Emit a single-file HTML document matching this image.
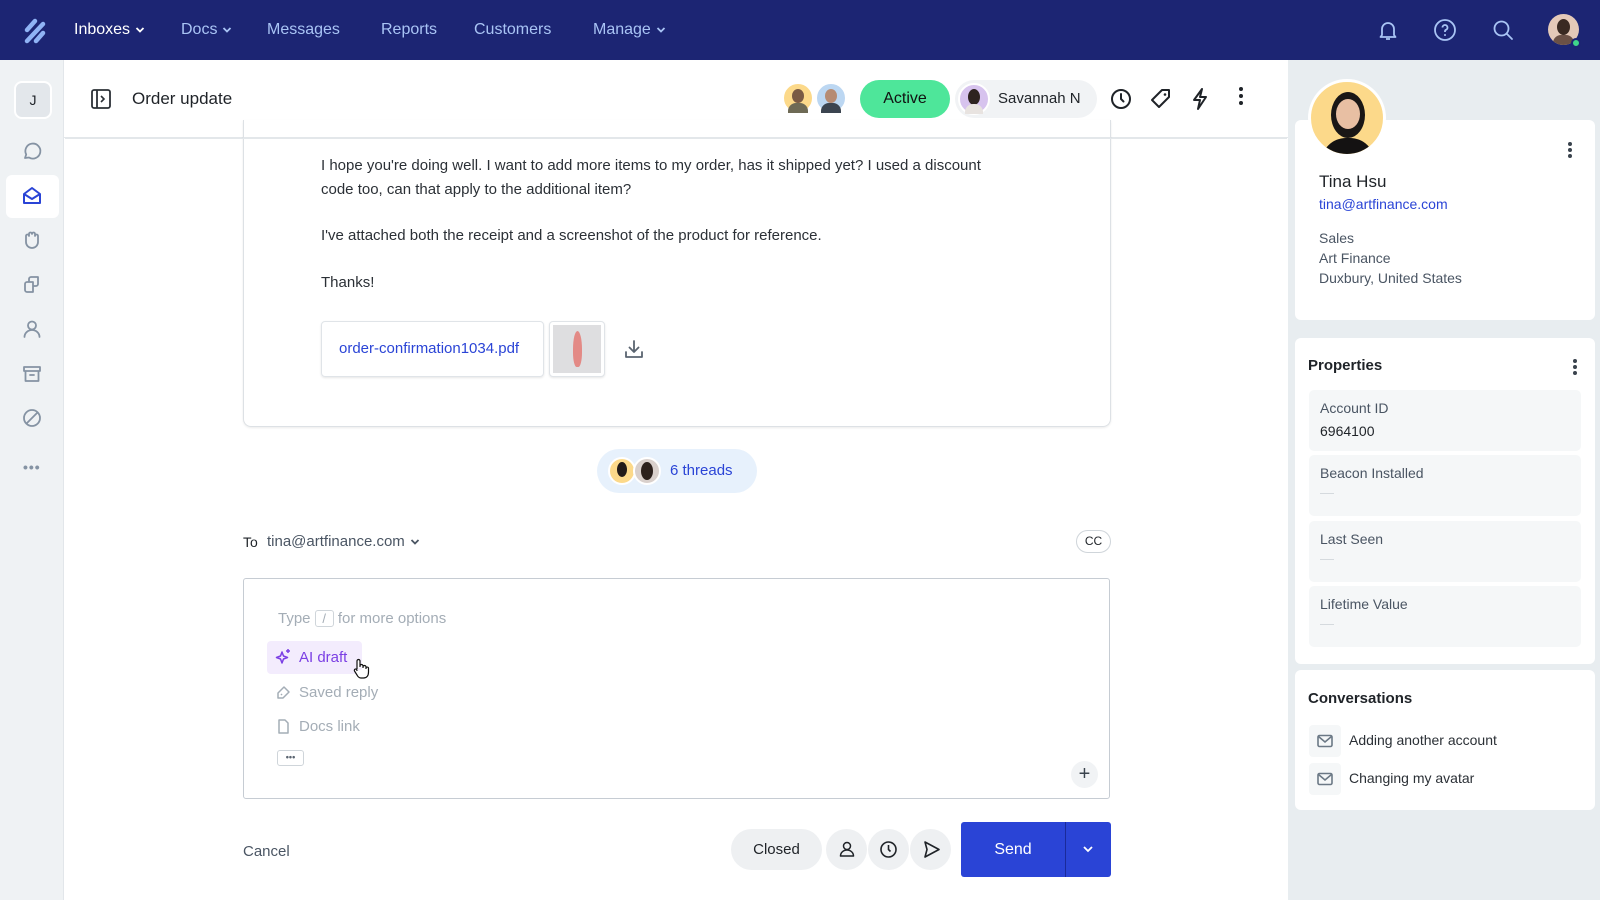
<!DOCTYPE html>
<html><head><meta charset="utf-8"><style>
*{box-sizing:border-box;margin:0;padding:0}
body{width:1600px;height:900px;overflow:hidden;font-family:"Liberation Sans",sans-serif;background:#fff;position:relative;color:#1f2328}
.a{position:absolute}
.nav{left:0;top:0;width:1600px;height:60px;background:#1c2573}
.nav .it{top:21px;font-size:16px;color:#a9c4f5;line-height:18px;white-space:nowrap}
.chev{display:inline-block;vertical-align:middle;margin-left:5px}
.side{left:0;top:60px;width:64px;height:840px;background:#eff2f4;border-right:1px solid #e2e6ea}
.ic{stroke:#8593a3;fill:none;stroke-width:1.8;stroke-linecap:round;stroke-linejoin:round}
.hdr{left:64px;top:60px;width:1224px;height:78px;background:#fff;border-bottom:1px solid #e3e7ea}
.rp{left:1288px;top:60px;width:312px;height:840px;background:#e8edf0}
.card{background:#fff;border-radius:6px;left:7px;width:300px}
.fld{left:14px;width:272px;height:61px;background:#f5f7f8;border-radius:5px}
.fld .l{left:11px;top:10px;font-size:14px;color:#4a5563}
.fld .v{left:11px;top:33px;font-size:14px;color:#1f2328}
.fld .d{left:11px;top:38px;width:14px;height:1px;background:#d5dade}
.msg{font-size:15px;color:#2b3036;left:321px}
.circ{border-radius:50%}
</style></head><body>

<div class="a nav">
 <svg class="a" style="left:22px;top:18px" width="26" height="26" viewBox="0 0 26 26"><g stroke="#8fb3f5" stroke-width="4.5" stroke-linecap="round"><line x1="5" y1="12" x2="13" y2="3"/><line x1="5" y1="23" x2="21" y2="6"/><line x1="14" y1="23" x2="21" y2="15"/></g></svg>
 <div class="a it" style="left:74px;color:#fff">Inboxes<svg class="chev" width="10" height="8" viewBox="0 0 10 8"><path d="M1.5 2l3.5 3.5L8.5 2" fill="none" stroke="#fff" stroke-width="1.8"/></svg></div>
 <div class="a it" style="left:181px">Docs<svg class="chev" width="10" height="8" viewBox="0 0 10 8"><path d="M1.5 2l3.5 3.5L8.5 2" fill="none" stroke="#a9c4f5" stroke-width="1.8"/></svg></div>
 <div class="a it" style="left:267px">Messages</div>
 <div class="a it" style="left:381px">Reports</div>
 <div class="a it" style="left:474px">Customers</div>
 <div class="a it" style="left:593px">Manage<svg class="chev" width="10" height="8" viewBox="0 0 10 8"><path d="M1.5 2l3.5 3.5L8.5 2" fill="none" stroke="#a9c4f5" stroke-width="1.8"/></svg></div>
 <svg class="a" style="left:1376px;top:18px" width="24" height="24" viewBox="0 0 24 24"><path d="M6 17V11a6 6 0 0 1 12 0v6l1.5 2h-15z M10 21h4" fill="none" stroke="#a9c4f5" stroke-width="1.8" stroke-linejoin="round"/></svg>
 <svg class="a" style="left:1433px;top:18px" width="24" height="24" viewBox="0 0 24 24"><circle cx="12" cy="12" r="10" fill="none" stroke="#a9c4f5" stroke-width="1.8"/><path d="M9.5 9.5a2.5 2.5 0 1 1 3.5 2.3c-.7.3-1 .8-1 1.5v.7" fill="none" stroke="#a9c4f5" stroke-width="1.8"/><circle cx="12" cy="17" r="1" fill="#a9c4f5"/></svg>
 <svg class="a" style="left:1491px;top:18px" width="24" height="24" viewBox="0 0 24 24"><circle cx="10.5" cy="10.5" r="7" fill="none" stroke="#a9c4f5" stroke-width="1.8"/><line x1="16" y1="16" x2="21" y2="21" stroke="#a9c4f5" stroke-width="1.8" stroke-linecap="round"/></svg>
 <div class="a circ" style="left:1548px;top:14px;width:31px;height:31px;background:#e4c9b8;overflow:hidden"><div class="a circ" style="left:9px;top:5px;width:13px;height:16px;background:#3a2a22"></div><div class="a" style="left:5px;top:21px;width:21px;height:12px;background:#6b5146;border-radius:8px 8px 0 0"></div></div>
 <div class="a circ" style="left:1571px;top:38px;width:10px;height:10px;background:#3fd68a;border:2px solid #1c2573"></div>
</div>

<div class="a side">
 <div class="a" style="left:14px;top:21px;width:38px;height:38px;background:#e3e7eb;border:2px solid #fff;border-radius:8px;font-size:14px;text-align:center;line-height:34px">J</div>
 <svg class="a" style="left:21px;top:80px" width="22" height="22" viewBox="0 0 22 22"><path class="ic" d="M4 18l1.2-3.5A7.5 7.5 0 1 1 8 17.5z"/></svg>
 <div class="a" style="left:6px;top:115px;width:53px;height:43px;background:#fff;border-radius:6px"></div>
 <svg class="a" style="left:21px;top:125px" width="22" height="22" viewBox="0 0 22 22"><path d="M3 9l8-6 8 6v9H3z M3 9l8 5 8-5" fill="none" stroke="#2a44d6" stroke-width="2" stroke-linejoin="round"/></svg>
 <svg class="a" style="left:21px;top:169px" width="22" height="22" viewBox="0 0 22 22"><path class="ic" d="M5 12V7a1.5 1.5 0 0 1 3 0V5a1.5 1.5 0 0 1 3 0v0a1.5 1.5 0 0 1 3 0v2a1.5 1.5 0 0 1 3 0v6a6 6 0 0 1-12 0z"/></svg>
 <svg class="a" style="left:21px;top:214px" width="22" height="22" viewBox="0 0 22 22"><path class="ic" d="M8 8V5a2 2 0 0 1 2-2h7v7a2 2 0 0 1-2 2h-3 M4 10a2 2 0 0 1 2-2h6v10H6a2 2 0 0 1-2-2z"/></svg>
 <svg class="a" style="left:21px;top:258px" width="22" height="22" viewBox="0 0 22 22"><circle class="ic" cx="11" cy="7.5" r="4"/><path class="ic" d="M3.5 19a7.5 7 0 0 1 15 0"/></svg>
 <svg class="a" style="left:21px;top:303px" width="22" height="22" viewBox="0 0 22 22"><path class="ic" d="M3 4h16v4H3z M4.5 8v10h13V8 M9 12h4"/></svg>
 <svg class="a" style="left:21px;top:347px" width="22" height="22" viewBox="0 0 22 22"><circle class="ic" cx="11" cy="11" r="8"/><line class="ic" x1="6" y1="16" x2="16" y2="6"/></svg>
 <div class="a" style="left:23px;top:399px;font-size:14px;color:#8593a3;letter-spacing:1px;font-weight:bold">•••</div>
</div>

<div class="a hdr">
 <svg class="a" style="left:26px;top:28px" width="22" height="22" viewBox="0 0 22 22"><rect x="2" y="2" width="18" height="18" rx="2" fill="none" stroke="#2b3036" stroke-width="1.8"/><line x1="7" y1="2" x2="7" y2="20" stroke="#2b3036" stroke-width="1.8"/><path d="M11 8l3 3-3 3" fill="none" stroke="#2b3036" stroke-width="1.6"/></svg>
 <div class="a" style="left:68px;top:29px;font-size:17px;color:#1f2328">Order update</div>
 <div class="a circ" style="left:718px;top:22px;width:32px;height:32px;background:#fcd98a;border:2px solid #fff"><div class="a circ" style="left:8px;top:5px;width:12px;height:14px;background:#7a5a44"></div><div class="a" style="left:4px;top:19px;width:20px;height:10px;background:#6e6a55;border-radius:8px 8px 0 0"></div></div>
 <div class="a circ" style="left:751px;top:22px;width:32px;height:32px;background:#bcd7f2;border:2px solid #fff"><div class="a circ" style="left:8px;top:5px;width:12px;height:14px;background:#b68b73"></div><div class="a" style="left:4px;top:19px;width:20px;height:10px;background:#3b4450;border-radius:8px 8px 0 0"></div></div>
 <div class="a" style="left:796px;top:20px;width:90px;height:38px;background:#4ee69a;border-radius:19px;font-size:16px;text-align:center;line-height:38px;color:#111">Active</div>
 <div class="a" style="left:891px;top:20px;width:142px;height:38px;background:#f1f3f5;border-radius:19px"><div class="a circ" style="left:3px;top:3px;width:32px;height:32px;background:#d7c3ee;border:2px solid #fff"><div class="a circ" style="left:8px;top:4px;width:12px;height:16px;background:#2e2320"></div><div class="a" style="left:5px;top:19px;width:18px;height:10px;background:#e8e3e0;border-radius:8px 8px 0 0"></div></div><div class="a" style="left:43px;top:10px;font-size:15px;color:#1f2328">Savannah N</div></div>
 <svg class="a" style="left:1045px;top:27px" width="24" height="24" viewBox="0 0 24 24"><circle cx="12" cy="12" r="9" fill="none" stroke="#1f2328" stroke-width="2"/><path d="M12 7v5l2.5 2.5" fill="none" stroke="#1f2328" stroke-width="2" stroke-linecap="round"/></svg>
 <svg class="a" style="left:1085px;top:27px" width="24" height="24" viewBox="0 0 24 24"><path d="M13 3h7v7l-10 10-7-7z" fill="none" stroke="#1f2328" stroke-width="2" stroke-linejoin="round"/><circle cx="16" cy="7.5" r="1.3" fill="#1f2328"/></svg>
 <svg class="a" style="left:1124px;top:27px" width="24" height="24" viewBox="0 0 24 24"><path d="M14 2L6 13h6l-2 9 8-12h-6z" fill="none" stroke="#1f2328" stroke-width="2" stroke-linejoin="round"/></svg>
 <div class="a" style="left:1175px;top:27px;width:4px;font-size:0"><div class="circ" style="width:4px;height:4px;background:#1f2328;margin-bottom:3px"></div><div class="circ" style="width:4px;height:4px;background:#1f2328;margin-bottom:3px"></div><div class="circ" style="width:4px;height:4px;background:#1f2328"></div></div>
</div>

<div class="a" style="left:243px;top:120px;width:868px;height:307px;border:1px solid #dde1e5;border-top:none;border-radius:0 0 8px 8px;box-shadow:0 1px 2px rgba(0,0,0,.08)"></div>
<div class="a" style="left:65px;top:138px;width:1222px;height:1px;background:#e3e7ea"></div>
<div class="a msg" style="top:154px;line-height:24px">I hope you're doing well. I want to add more items to my order, has it shipped yet? I used a discount<br>code too, can that apply to the additional item?</div>
<div class="a msg" style="top:227px">I've attached both the receipt and a screenshot of the product for reference.</div>
<div class="a msg" style="top:274px">Thanks!</div>
<div class="a" style="left:321px;top:321px;width:223px;height:56px;border:1px solid #e0e4e8;border-radius:4px;box-shadow:0 1px 2px rgba(0,0,0,.1);font-size:15px;color:#2a44d6;line-height:54px;padding-left:17px">order-confirmation1034.pdf</div>
<div class="a" style="left:549px;top:321px;width:56px;height:56px;border:1px solid #e0e4e8;border-radius:4px;background:#fff;box-shadow:0 1px 2px rgba(0,0,0,.1)"><div class="a" style="left:3px;top:3px;width:48px;height:48px;background:#dedee0"><div class="a" style="left:20px;top:6px;width:9px;height:36px;background:#e38a86;border-radius:50% 50% 40% 40%"></div></div></div>
<svg class="a" style="left:623px;top:338px" width="22" height="22" viewBox="0 0 22 22"><path d="M11 3v11 M6.5 9.5L11 14l4.5-4.5 M3 14v5h16v-5" fill="none" stroke="#5a6470" stroke-width="1.8" stroke-linecap="round" stroke-linejoin="round"/></svg>

<div class="a" style="left:597px;top:449px;width:160px;height:44px;background:#e7f1fc;border-radius:22px"><div class="a circ" style="left:11px;top:8px;width:28px;height:28px;background:#fcd98a;border:2px solid #fff"><div class="a circ" style="left:7px;top:3px;width:10px;height:15px;background:#221b18"></div></div><div class="a circ" style="left:36px;top:8px;width:28px;height:28px;background:#d9d0cc;border:2px solid #fff"><div class="a circ" style="left:6px;top:3px;width:12px;height:18px;background:#2c211c"></div></div><div class="a" style="left:73px;top:13px;font-size:15px;color:#2a44d6">6 threads</div></div>

<div class="a" style="left:243px;top:534px;font-size:14px;color:#1f2328">To</div>
<div class="a" style="left:267px;top:533px;font-size:15px;color:#4a5563">tina@artfinance.com<svg class="chev" width="10" height="8" viewBox="0 0 10 8"><path d="M1.5 2l3.5 3.5L8.5 2" fill="none" stroke="#4a5563" stroke-width="1.8"/></svg></div>
<div class="a" style="left:1076px;top:530px;width:35px;height:23px;border:1px solid #cfd5da;border-radius:12px;font-size:12px;text-align:center;line-height:21px">CC</div>

<div class="a" style="left:243px;top:578px;width:867px;height:221px;border:1px solid #c6ccd3;border-radius:3px"></div>
<div class="a" style="left:278px;top:610px;font-size:15px;color:#a4adb6">Type <span style="display:inline-block;border:1px solid #cfd5da;border-radius:3px;width:19px;text-align:center;font-size:13px">/</span> for more options</div>
<div class="a" style="left:267px;top:641px;width:95px;height:33px;background:#f3ecfd;border-radius:4px"></div>
<svg class="a" style="left:275px;top:648px" width="18" height="18" viewBox="0 0 18 18"><path d="M7 4l1.5 4 4 1.5-4 1.5L7 15l-1.5-4-4-1.5 4-1.5z M13 1v4 M11 3h4" fill="none" stroke="#7b3fe4" stroke-width="1.5" stroke-linejoin="round"/></svg>
<div class="a" style="left:299px;top:649px;font-size:15px;color:#7b3fe4">AI draft</div>
<svg class="a" style="left:352px;top:658px" width="18" height="22" viewBox="0 0 18 22"><path d="M5 11V3a1.5 1.5 0 0 1 3 0v6 M8 8a1.5 1.5 0 0 1 3 0v2 M11 9a1.5 1.5 0 0 1 3 0v2 M14 10a1.3 1.3 0 0 1 2.5 0v4c0 4-2 6-5 6H9c-2 0-3-1-4-3l-2.5-4a1.3 1.3 0 0 1 2.3-1.3L5 13" fill="#fff" stroke="#111" stroke-width="1.2" stroke-linejoin="round"/></svg>
<svg class="a" style="left:275px;top:684px" width="17" height="17" viewBox="0 0 17 17"><path d="M9 3l5 5-6 6H3V9z M6 11l1-1" fill="none" stroke="#a4adb6" stroke-width="1.5" stroke-linejoin="round"/></svg>
<div class="a" style="left:299px;top:684px;font-size:15px;color:#a4adb6">Saved reply</div>
<svg class="a" style="left:275px;top:718px" width="17" height="17" viewBox="0 0 17 17"><path d="M4 2h6l3 3v10H4z" fill="none" stroke="#a4adb6" stroke-width="1.5" stroke-linejoin="round"/></svg>
<div class="a" style="left:299px;top:718px;font-size:15px;color:#a4adb6">Docs link</div>
<div class="a" style="left:277px;top:750px;width:27px;height:16px;border:1px solid #cfd5da;border-radius:3px;font-size:9px;text-align:center;line-height:13px;color:#5a6470;font-weight:bold">•••</div>
<div class="a circ" style="left:1071px;top:761px;width:27px;height:27px;background:#f1f3f5;font-size:20px;text-align:center;line-height:26px;color:#3a434d">+</div>

<div class="a" style="left:243px;top:843px;font-size:15px;color:#4a5563">Cancel</div>
<div class="a" style="left:731px;top:829px;width:91px;height:41px;background:#eef0f2;border-radius:21px;font-size:15px;text-align:center;line-height:41px;color:#1f2328">Closed</div>
<div class="a circ" style="left:826px;top:829px;width:41px;height:41px;background:#eef0f2"><svg class="a" style="left:12px;top:11px" width="18" height="18" viewBox="0 0 18 18"><circle cx="9" cy="6" r="3.5" fill="none" stroke="#1f2328" stroke-width="1.5"/><path d="M2.5 16a6.5 6 0 0 1 13 0z" fill="none" stroke="#1f2328" stroke-width="1.5" stroke-linejoin="round"/></svg></div>
<div class="a circ" style="left:868px;top:829px;width:41px;height:41px;background:#eef0f2"><svg class="a" style="left:11px;top:11px" width="19" height="19" viewBox="0 0 19 19"><circle cx="9.5" cy="9.5" r="7.5" fill="none" stroke="#1f2328" stroke-width="1.6"/><path d="M9.5 5v4.5l2 2" fill="none" stroke="#1f2328" stroke-width="1.6"/></svg></div>
<div class="a circ" style="left:910px;top:829px;width:41px;height:41px;background:#eef0f2"><svg class="a" style="left:12px;top:11px" width="19" height="19" viewBox="0 0 19 19"><path d="M3 2l14 7.5L3 17l2-7.5z" fill="none" stroke="#1f2328" stroke-width="1.6" stroke-linejoin="round"/></svg></div>
<div class="a" style="left:961px;top:822px;width:150px;height:55px;background:#2a44d6;border-radius:3px"><div class="a" style="left:0;top:0;width:104px;height:55px;font-size:16px;color:#fff;text-align:center;line-height:55px">Send</div><div class="a" style="left:104px;top:0;width:1px;height:55px;background:#1a2a9a"></div><svg class="a" style="left:121px;top:22px" width="12" height="10" viewBox="0 0 12 10"><path d="M2 3l4 4 4-4" fill="none" stroke="#fff" stroke-width="1.8"/></svg></div>

<div class="a rp">
 <div class="a card" style="top:60px;height:200px"></div>
 <div class="a circ" style="left:20px;top:19px;width:78px;height:78px;background:#fcd98a;border:3px solid #fff;overflow:hidden"><div class="a circ" style="left:20px;top:10px;width:34px;height:46px;background:#1a1716"></div><div class="a circ" style="left:25px;top:17px;width:24px;height:30px;background:#e8bfa3"></div><div class="a" style="left:10px;top:56px;width:54px;height:30px;background:#141212;border-radius:25px 25px 0 0"></div></div>
 <div class="a" style="left:280px;top:82px;width:4px;font-size:0"><div class="circ" style="width:4px;height:4px;background:#3a434d;margin-bottom:2px"></div><div class="circ" style="width:4px;height:4px;background:#3a434d;margin-bottom:2px"></div><div class="circ" style="width:4px;height:4px;background:#3a434d"></div></div>
 <div class="a" style="left:31px;top:112px;font-size:17px;color:#1f2328">Tina Hsu</div>
 <div class="a" style="left:31px;top:136px;font-size:14px;color:#2a44d6">tina@artfinance.com</div>
 <div class="a" style="left:31px;top:168px;font-size:14px;color:#4a5563;line-height:20px">Sales<br>Art Finance<br>Duxbury, United States</div>

 <div class="a card" style="top:278px;height:326px">
  <div class="a" style="left:13px;top:19px;font-size:15px;font-weight:bold;color:#1f2328">Properties</div>
  <div class="a" style="left:278px;top:21px;width:4px;font-size:0"><div class="circ" style="width:4px;height:4px;background:#3a434d;margin-bottom:2px"></div><div class="circ" style="width:4px;height:4px;background:#3a434d;margin-bottom:2px"></div><div class="circ" style="width:4px;height:4px;background:#3a434d"></div></div>
  <div class="a fld" style="top:52px"><div class="a l">Account ID</div><div class="a v">6964100</div></div>
  <div class="a fld" style="top:117px"><div class="a l">Beacon Installed</div><div class="a d"></div></div>
  <div class="a fld" style="top:183px"><div class="a l">Last Seen</div><div class="a d"></div></div>
  <div class="a fld" style="top:248px"><div class="a l">Lifetime Value</div><div class="a d"></div></div>
 </div>

 <div class="a card" style="top:610px;height:140px">
  <div class="a" style="left:13px;top:20px;font-size:15px;font-weight:bold;color:#1f2328">Conversations</div>
  <div class="a" style="left:14px;top:55px;width:32px;height:32px;background:#f5f7f8;border-radius:4px"><svg class="a" style="left:8px;top:9px" width="16" height="14" viewBox="0 0 16 14"><rect x="1" y="1.5" width="14" height="11" rx="1.5" fill="none" stroke="#6b7885" stroke-width="1.6"/><path d="M1.5 2.5L8 8l6.5-5.5" fill="none" stroke="#6b7885" stroke-width="1.6"/></svg></div>
  <div class="a" style="left:54px;top:62px;font-size:14px;color:#2b3036">Adding another account</div>
  <div class="a" style="left:14px;top:93px;width:32px;height:32px;background:#f5f7f8;border-radius:4px"><svg class="a" style="left:8px;top:9px" width="16" height="14" viewBox="0 0 16 14"><rect x="1" y="1.5" width="14" height="11" rx="1.5" fill="none" stroke="#6b7885" stroke-width="1.6"/><path d="M1.5 2.5L8 8l6.5-5.5" fill="none" stroke="#6b7885" stroke-width="1.6"/></svg></div>
  <div class="a" style="left:54px;top:100px;font-size:14px;color:#2b3036">Changing my avatar</div>
 </div>
</div>
</body></html>
